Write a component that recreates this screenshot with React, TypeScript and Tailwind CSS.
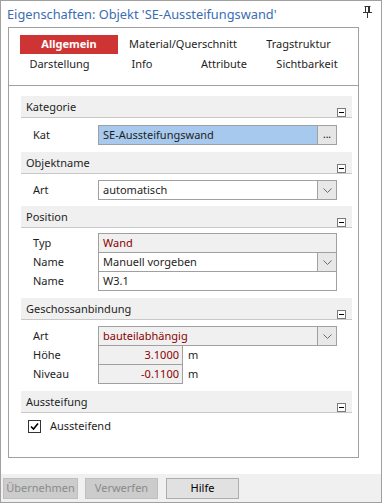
import React from 'react';

const font = "font-['Noto_Sans','Open_Sans',sans-serif]";

function Collapse() {
  return (
    <div className="w-[9px] h-[9px] border border-[#7a7a7a] bg-white flex items-center justify-center">
      <div className="w-[5px] h-px bg-black" />
    </div>
  );
}

function SectionHeader({ title }: { title: string }) {
  return (
    <div className="h-[22px] bg-[#f0f0f0] border-b border-[#c8c8c8] flex justify-between pl-[5px] pr-[6px]">
      <span className="text-[11px] leading-[21px] text-[#1e1e1e]">{title}</span>
      <div className="pt-[12px]">
        <Collapse />
      </div>
    </div>
  );
}

function Chevron() {
  return (
    <div className="w-[19px] h-full bg-[#e8e8e8] border-l border-[#a0a0a0] flex items-center justify-center">
      <svg width="9" height="5" viewBox="0 0 9 5">
        <path d="M0.5 0.5 L4.5 4.5 L8.5 0.5" fill="none" stroke="#6b6b6b" strokeWidth="1" />
      </svg>
    </div>
  );
}

type RowProps = {
  label: string;
  first?: boolean;
  children: React.ReactNode;
  className?: string;
  unit?: string;
};

function Row({ label, first, children, className, unit }: RowProps) {
  return (
    <div className={`flex items-center h-[20px] ${first ? '' : '-mt-px'}`}>
      <div className="w-[77px] pl-[12px] text-[11px] text-[#1e1e1e]">{label}</div>
      <div className={`h-[20px] border border-[#a0a0a0] flex items-stretch text-[11px] ${className ?? ''}`}>
        {children}
      </div>
      {unit && <span className="ml-[5px] text-[11px] text-[#1e1e1e]">{unit}</span>}
    </div>
  );
}

export default function App() {
  return (
    <div className={`w-[382px] h-[503px] border border-[#a0a0a0] bg-white flex flex-col ${font}`}>
      <div className="h-[26px] flex items-center justify-between pl-[6px] pr-[9px]">
        <span className="text-[12.8px] text-[#3b6db3] leading-none">Eigenschaften: Objekt 'SE-Aussteifungswand'</span>
        <svg width="9" height="13" viewBox="0 0 9 13" className="mb-[4px]">
          <path d="M1.5 0.5 H7.5" stroke="#333" strokeWidth="1" />
          <path d="M2.5 1 V6 M5.5 1 V6" stroke="#333" strokeWidth="1" />
          <rect x="5" y="1" width="2" height="5" fill="#333" />
          <path d="M0 6.5 H9" stroke="#333" strokeWidth="1" />
          <path d="M4.5 7 V12" stroke="#333" strokeWidth="1" />
        </svg>
      </div>

      <div className="mx-[7px] w-[351px] h-[431px] border border-[#a0a0a0] flex flex-col">
        <div className="h-[58px] border-b border-[#a0a0a0] pt-[7px] pl-[11px] text-[11px] text-[#1e1e1e]">
          <div className="flex h-[19px] items-center">
            <div className="w-[98px] h-[19px] bg-[#cf3434] text-white font-bold flex items-center justify-center">Allgemein</div>
            <div className="w-[130px] text-center">Material/Querschnitt</div>
            <div className="w-[101px] text-center">Tragstruktur</div>
          </div>
          <div className="flex h-[19px] items-center mt-px">
            <div className="w-[79px] text-center">Darstellung</div>
            <div className="w-[86px] text-center">Info</div>
            <div className="w-[78px] text-center">Attribute</div>
            <div className="w-[88px] text-center">Sichtbarkeit</div>
          </div>
        </div>

        <div className="pl-[12px] pr-[6px] pt-[10px]">
          <SectionHeader title="Kategorie" />
          <div className="pt-[7px] pb-[7px]">
            <Row label="Kat" first className="w-[239px]">
              <div className="flex-1 bg-[#a8c9ee] pl-[4px] leading-[18px] text-[#1e1e1e]">SE-Aussteifungswand</div>
              <div className="w-[19px] bg-[#e6e6e6] border-l border-[#a0a0a0] text-center leading-[16px] text-[10px]">...</div>
            </Row>
          </div>

          <SectionHeader title="Objektname" />
          <div className="pt-[6px] pb-[6px]">
            <Row label="Art" first className="w-[239px]">
              <div className="flex-1 pl-[4px] leading-[18px] text-[#1e1e1e]">automatisch</div>
              <Chevron />
            </Row>
          </div>

          <SectionHeader title="Position" />
          <div className="pt-[5px] pb-[7px]">
            <Row label="Typ" first className="w-[239px] bg-[#f0f0f0]">
              <div className="flex-1 pl-[4px] leading-[18px] text-[#8b0000]">Wand</div>
            </Row>
            <Row label="Name" className="w-[239px]">
              <div className="flex-1 pl-[4px] leading-[18px] text-[#1e1e1e]">Manuell vorgeben</div>
              <Chevron />
            </Row>
            <Row label="Name" className="w-[239px]">
              <div className="flex-1 pl-[4px] leading-[18px] text-[#1e1e1e]">W3.1</div>
            </Row>
          </div>

          <SectionHeader title="Geschossanbindung" />
          <div className="pt-[6px] pb-[7px]">
            <Row label="Art" first className="w-[239px] bg-[#f0f0f0]">
              <div className="flex-1 pl-[4px] leading-[18px] text-[#8b0000]">bauteilabhängig</div>
              <Chevron />
            </Row>
            <Row label="Höhe" className="w-[85px] bg-[#f0f0f0]" unit="m">
              <div className="flex-1 pr-[3px] text-right leading-[18px] text-[#8b0000]">3.1000</div>
            </Row>
            <Row label="Niveau" className="w-[85px] bg-[#f0f0f0]" unit="m">
              <div className="flex-1 pr-[3px] text-right leading-[18px] text-[#8b0000]">-0.1100</div>
            </Row>
          </div>

          <SectionHeader title="Aussteifung" />
          <div className="flex items-center pt-[5px] pl-[7px]">
            <div className="w-[13px] h-[13px] border border-[#333] bg-white flex items-center justify-center">
              <svg width="9" height="9" viewBox="0 0 9 9">
                <path d="M1 4.5 L3.5 7 L8 1.5" fill="none" stroke="#000" strokeWidth="1.6" />
              </svg>
            </div>
            <span className="ml-[9px] text-[11px] text-[#1e1e1e]">Aussteifend</span>
          </div>
        </div>
      </div>

      <div className="flex-1" />

      <div className="h-[28px] bg-[#f0f0f0] flex items-start pt-[4px] pl-[2px] text-[11px]">
        <div className="w-[75px] h-[21px] bg-[#cccccc] border border-[#bfbfbf] text-[#8a8a8a] flex items-center justify-center">Übernehmen</div>
        <div className="w-[73px] h-[21px] ml-[7px] bg-[#cccccc] border border-[#bfbfbf] text-[#8a8a8a] flex items-center justify-center">Verwerfen</div>
        <div className="w-[73px] h-[21px] ml-[8px] bg-[#e1e1e1] border border-[#adadad] text-black flex items-center justify-center">Hilfe</div>
      </div>
    </div>
  );
}
